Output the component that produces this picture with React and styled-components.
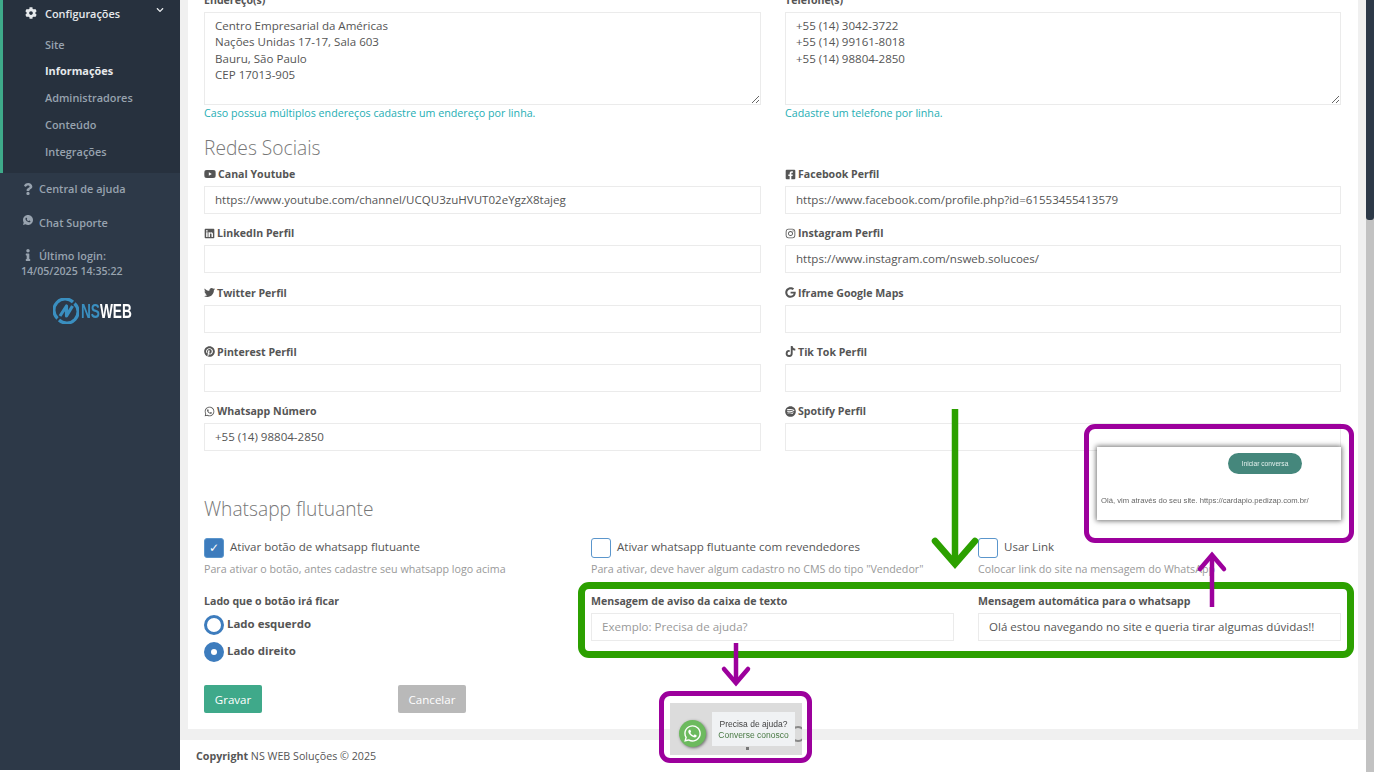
import React from 'react'
import styled, { createGlobalStyle } from 'styled-components'
import {
  FaCog, FaChevronDown, FaQuestion, FaWhatsapp, FaInfo, FaYoutube, FaFacebookSquare, FaLinkedin,
  FaInstagram, FaTwitter, FaGoogle, FaPinterest, FaTiktok, FaSpotify,
} from 'react-icons/fa'
import { RiWhatsappFill } from 'react-icons/ri'

const GlobalStyle = createGlobalStyle`
  html, body { margin: 0; padding: 0; height: 772px; overflow: hidden; background: #fff; }
  body, input, textarea, button { font-family: "Open Sans", "Liberation Sans", sans-serif; }
  * { box-sizing: border-box; }
`

const Page = styled.div`
  position: relative;
  display: flex;
  width: 1374px;
  height: 772px;
  overflow: hidden;
`

const Sidebar = styled.aside`
  flex: 0 0 180px;
  height: 770px;
  background: #2d3948;
  color: #98a3af;
  font-size: 10.9px;
  font-weight: 600;
`

const ActiveGroup = styled.div`
  height: 173px;
  background: #27313e;
  border-left: 3px solid #3eaa8a;
`

const GroupTitle = styled.div`
  display: flex;
  align-items: center;
  height: 26px;
  margin-bottom: 5.5px;
  padding-left: 22px;
  color: #e6e9ec;
  svg { font-size: 12px; }
  span { margin-left: 8px; flex: 1; }
  svg:last-child { font-size: 8px; margin: 0 16px 6px 0; }
`

const SubLink = styled.div`
  height: 26.75px;
  line-height: 26.75px;
  padding-left: 42px;
  color: ${p => (p.$active ? '#e6e9ec' : '#98a3af')};
  font-weight: ${p => (p.$active ? 700 : 600)};
`

const HelpLink = styled.div`
  display: flex;
  align-items: center;
  height: ${p => p.$h || 34}px;
  padding-left: 22px;
  svg { flex: 0 0 12px; font-size: ${p => p.$icon || 12}px; margin: ${p => p.$iconMargin || '0'}; }
  span { margin-left: 5px; }
`

const LoginDate = styled.div`
  margin-top: -7px;
  padding-left: 21px;
  font-size: 10.6px;
  line-height: 16px;
`

const Logo = styled.div`
  display: flex;
  align-items: center;
  margin: 18px 0 0 53px;
  height: 28px;
`

const LogoText = styled.div`
  display: inline-block;
  margin-left: 2px;
  font-family: "Liberation Sans", sans-serif;
  font-size: 21px;
  font-weight: 700;
  line-height: 28px;
  white-space: nowrap;
  color: #fff;
  transform: scaleX(0.65);
  transform-origin: left center;
  b { color: #3a8fc0; }
`

const Main = styled.main`
  flex: 1;
  display: flex;
  flex-direction: column;
  min-width: 0;
  background: #f0f0f0;
`

const Panel = styled.div`
  height: 740px;
  margin: -11px 8px 0;
  padding: 0 17px 0 16px;
  background: #fff;
  flex: 0 0 740px;
`

const TwoCols = styled.div`
  display: grid;
  grid-template-columns: 557px 556px;
  column-gap: 24px;
  row-gap: 8.33px;
`

const ThreeCols = styled.div`
  display: grid;
  grid-template-columns: repeat(3, 363px);
  column-gap: 24px;
`

const Field = styled.div`
  min-width: 0;
`

const Label = styled.div`
  display: flex;
  align-items: center;
  height: 20px;
  margin-bottom: 3px;
  padding-top: 2px;
  font-size: 10.6px;
  font-weight: 700;
  color: #555;
  svg { font-size: 11px; margin-right: 2px; flex: none; }
`

const TextInput = styled.input`
  display: block;
  width: 100%;
  height: 28px;
  padding: 0 10px 1px;
  border: 1px solid #ebebeb;
  border-radius: 0;
  outline: none;
  font-size: 11.55px;
  color: #555;
  &::placeholder { color: #999; opacity: 1; }
`

const TextArea = styled.textarea`
  display: block;
  width: 100%;
  height: 93px;
  padding: 5px 10px;
  border: 1px solid #ebebeb;
  border-radius: 0;
  outline: none;
  resize: vertical;
  font-size: 11.55px;
  line-height: 16.3px;
  color: #555;
`

const Help = styled.div`
  font-size: 10.7px;
  line-height: 16px;
  color: #25aeb4;
`

const SectionTitle = styled.h3`
  margin: ${p => p.$margin};
  font-size: 19.2px;
  font-weight: 300;
  line-height: 28px;
  color: #777;
`

const CheckRow = styled.div`
  display: flex;
  align-items: flex-start;
  gap: 6px;
  height: 20px;
  font-size: 11.55px;
  line-height: 18px;
  color: #555;
`

const CheckBox = styled.span`
  display: flex;
  align-items: center;
  justify-content: center;
  width: 20px;
  height: 20px;
  border-radius: 3px;
  border: 1px solid #5b96cc;
  background: ${p => (p.$checked ? '#3d7cbd' : '#fff')};
  color: #fff;
  font-family: "DejaVu Sans", sans-serif;
  font-size: 12px;
  font-weight: 700;
  line-height: 1;
`

const Hint = styled.div`
  margin: 3px 0 13px;
  font-size: 10.7px;
  line-height: 16px;
  color: #999;
  white-space: nowrap;
`

const RadioGroup = styled.div`
  padding-top: 2px;
`

const RadioRow = styled.div`
  display: flex;
  align-items: flex-start;
  gap: 3px;
  height: 20px;
  margin-bottom: 7px;
  font-size: 11.45px;
  font-weight: 700;
  line-height: 18px;
  color: #555;
`

const RadioDot = styled.span`
  display: flex;
  align-items: center;
  justify-content: center;
  width: 20px;
  height: 20px;
  border-radius: 50%;
  border: 3px solid #3d7cbd;
  background: ${p => (p.$checked ? '#3d7cbd' : '#fff')};
  &::after {
    content: "";
    display: ${p => (p.$checked ? 'block' : 'none')};
    width: 6px;
    height: 6px;
    border-radius: 50%;
    background: #fff;
  }
`

const Buttons = styled.div`
  display: flex;
  gap: 136px;
  margin-top: 16px;
`

const Button = styled.button`
  height: 28px;
  padding: 0;
  width: ${p => p.$w}px;
  border: 0;
  border-radius: 2px;
  background: ${p => p.$bg};
  color: #fff;
  font-size: 11.55px;
`

const Footer = styled.footer`
  display: flex;
  align-items: center;
  flex: 1;
  margin-top: 11px;
  padding: 0 16px;
  background: #fff;
  font-size: 10.7px;
  color: #555;
  b { font-weight: 700; }
`

const ScrollTrack = styled.div`
  flex: 0 0 8px;
  background: #c2c2c2;
`

const ScrollPart = styled.div`
  height: 220px;
  background: #2d3948;
  border-radius: 0 0 3px 3px;
`

// marcações feitas por cima da tela
const Marker = styled.div`
  position: absolute;
  left: ${p => p.$l}px;
  top: ${p => p.$t}px;
  width: ${p => p.$w}px;
  height: ${p => p.$h}px;
  border: ${p => p.$b}px solid ${p => p.$color};
  border-radius: 11px;
`

const ArrowSvg = styled.svg`
  position: absolute;
  left: ${p => p.$l}px;
  top: ${p => p.$t}px;
  overflow: visible;
`

const ChatShot = styled.div`
  position: absolute;
  left: 1097px;
  top: 447px;
  width: 244px;
  height: 73px;
  background: #fff;
  box-shadow: 0 0 5px 1px rgba(0, 0, 0, 0.55);
  font-family: "Liberation Sans", sans-serif;
`

const StartChat = styled.div`
  position: absolute;
  left: 131px;
  top: 6px;
  width: 74px;
  height: 21px;
  line-height: 21px;
  border-radius: 11px;
  background: #45877c;
  color: #e3f0ed;
  font-size: 6.7px;
  text-align: center;
  filter: blur(0.25px);
`

const ChatText = styled.div`
  position: absolute;
  left: 4px;
  top: 48px;
  font-size: 7.66px;
  line-height: 12px;
  color: #666;
  white-space: nowrap;
  filter: blur(0.25px);
`

const FloatShot = styled.div`
  position: absolute;
  left: 670px;
  top: 703px;
  width: 132px;
  height: 52px;
  background: #dcdcdc;
  overflow: hidden;
  font-family: "Liberation Sans", sans-serif;
`

const GreenCircle = styled.div`
  position: absolute;
  left: 9px;
  top: 17px;
  width: 27px;
  height: 27px;
  display: flex;
  align-items: center;
  justify-content: center;
  border-radius: 50%;
  background: #6cba5e;
  box-shadow: 1px 1px 3px rgba(0, 0, 0, 0.5);
  color: #fff;
  font-size: 19px;
`

const Bubble = styled.div`
  position: absolute;
  left: 42px;
  top: 9px;
  width: 83px;
  height: 34px;
  padding-top: 7px;
  background: #f0f2f4;
  font-size: 8.5px;
  line-height: 11px;
  text-align: center;
  color: #444;
  filter: blur(0.2px);
  em { display: block; font-style: normal; color: #4a7a45; }
`

const Ring = styled.div`
  position: absolute;
  left: 120px;
  top: 23px;
  width: 16px;
  height: 16px;
  border: 2px solid #888;
  border-radius: 50%;
`

const Dot = styled.div`
  position: absolute;
  left: 76px;
  top: 44px;
  width: 3px;
  height: 3px;
  background: #777;
`

const socialRows = [
  { icon: <FaYoutube size={12} />, label: 'Canal Youtube', value: 'https://www.youtube.com/channel/UCQU3zuHVUT02eYgzX8tajeg' },
  { icon: <FaFacebookSquare />, label: 'Facebook Perfil', value: 'https://www.facebook.com/profile.php?id=61553455413579' },
  { icon: <FaLinkedin />, label: 'LinkedIn Perfil', value: '' },
  { icon: <FaInstagram />, label: 'Instagram Perfil', value: 'https://www.instagram.com/nsweb.solucoes/' },
  { icon: <FaTwitter />, label: 'Twitter Perfil', value: '' },
  { icon: <FaGoogle />, label: 'Iframe Google Maps', value: '' },
  { icon: <FaPinterest />, label: 'Pinterest Perfil', value: '' },
  { icon: <FaTiktok />, label: 'Tik Tok Perfil', value: '' },
  { icon: <FaWhatsapp />, label: 'Whatsapp Número', value: '+55 (14) 98804-2850' },
  { icon: <FaSpotify />, label: 'Spotify Perfil', value: '' },
]

function LogoMark() {
  return (
    <svg width="26" height="26" viewBox="0 0 26 26" fill="none" stroke="#3a8fc0" strokeWidth="3.2" strokeLinejoin="round">
      <path d="M4.5 20.5A11.2 11.2 0 0 1 20 4" />
      <path d="M21.5 5.5A11.2 11.2 0 0 1 6 22" />
      <path d="M7 18L13.5 8V18L19.5 8" />
    </svg>
  )
}

function Arrow({ l, t, up, length, head, depth, width, color }) {
  const tip = up ? 0 : length
  const back = up ? depth : length - depth
  return (
    <ArrowSvg $l={l - head} $t={t} width={head * 2} height={length} fill="none" stroke={color} strokeWidth={width} strokeLinecap="round">
      <path d={`M${head} 0V${length}`} strokeLinecap="butt" />
      <path d={`M2 ${back}L${head} ${tip}L${head * 2 - 2} ${back}`} />
    </ArrowSvg>
  )
}

export default function App() {
  return (
    <Page>
      <GlobalStyle />
      <Sidebar>
        <ActiveGroup>
          <GroupTitle><FaCog /><span>Configurações</span><FaChevronDown /></GroupTitle>
          <SubLink>Site</SubLink>
          <SubLink $active>Informações</SubLink>
          <SubLink>Administradores</SubLink>
          <SubLink>Conteúdo</SubLink>
          <SubLink>Integrações</SubLink>
        </ActiveGroup>
        <HelpLink $h={31}><FaQuestion /><span>Central de ajuda</span></HelpLink>
        <HelpLink $h={36} $icon={14} $iconMargin="0 0 4px"><RiWhatsappFill /><span>Chat Suporte</span></HelpLink>
        <HelpLink $h={30}><FaInfo /><span>Último login:</span></HelpLink>
        <LoginDate>14/05/2025 14:35:22</LoginDate>
        <Logo>
          <LogoMark />
          <LogoText><b>NS</b>WEB</LogoText>
        </Logo>
      </Sidebar>
      <Main>
        <Panel>
          <TwoCols>
            <Field>
              <Label>Endereço(s)</Label>
              <TextArea readOnly value={'Centro Empresarial da Américas\nNações Unidas 17-17, Sala 603\nBauru, São Paulo\nCEP 17013-905'} />
              <Help>Caso possua múltiplos endereços cadastre um endereço por linha.</Help>
            </Field>
            <Field>
              <Label>Telefone(s)</Label>
              <TextArea readOnly value={'+55 (14) 3042-3722\n+55 (14) 99161-8018\n+55 (14) 98804-2850'} />
              <Help>Cadastre um telefone por linha.</Help>
            </Field>
          </TwoCols>
          <SectionTitle $margin="13px 0 1px">Redes Sociais</SectionTitle>
          <TwoCols>
            {socialRows.map(item => (
              <Field key={item.label}>
                <Label>{item.icon}{item.label}</Label>
                <TextInput readOnly value={item.value} />
              </Field>
            ))}
          </TwoCols>
          <SectionTitle $margin="44px 0 15px">Whatsapp flutuante</SectionTitle>
          <ThreeCols>
            <Field>
              <CheckRow><CheckBox $checked>✓</CheckBox>Ativar botão de whatsapp flutuante</CheckRow>
              <Hint>Para ativar o botão, antes cadastre seu whatsapp logo acima</Hint>
            </Field>
            <Field>
              <CheckRow><CheckBox />Ativar whatsapp flutuante com revendedores</CheckRow>
              <Hint>Para ativar, deve haver algum cadastro no CMS do tipo "Vendedor"</Hint>
            </Field>
            <Field>
              <CheckRow><CheckBox />Usar Link</CheckRow>
              <Hint>Colocar link do site na mensagem do WhatsApp</Hint>
            </Field>
            <Field>
              <Label>Lado que o botão irá ficar</Label>
              <RadioGroup>
                <RadioRow><RadioDot />Lado esquerdo</RadioRow>
                <RadioRow><RadioDot $checked />Lado direito</RadioRow>
              </RadioGroup>
            </Field>
            <Field>
              <Label>Mensagem de aviso da caixa de texto</Label>
              <TextInput readOnly placeholder="Exemplo: Precisa de ajuda?" />
            </Field>
            <Field>
              <Label>Mensagem automática para o whatsapp</Label>
              <TextInput readOnly value="Olá estou navegando no site e queria tirar algumas dúvidas!!" />
            </Field>
          </ThreeCols>
          <Buttons>
            <Button $w={58} $bg="#3fa98a">Gravar</Button>
            <Button $w={68} $bg="#b9b9b9">Cancelar</Button>
          </Buttons>
        </Panel>
        <Footer><span><b>Copyright</b> NS WEB Soluções © 2025</span></Footer>
      </Main>
      <ScrollTrack><ScrollPart /></ScrollTrack>

      <Marker $l={578} $t={582} $w={776} $h={76} $b={7} $color="#2ca000" />
      <Arrow l={955} t={409} length={155} head={22} depth={23} width={6.5} color="#2ca000" />
      <Marker $l={1084} $t={424} $w={270} $h={119} $b={5.5} $color="#9c009c" />
      <ChatShot>
        <StartChat>Iniciar conversa</StartChat>
        <ChatText>Olá, vim através do seu site. https://cardapio.pedizap.com.br/</ChatText>
      </ChatShot>
      <Arrow l={1212} t={555} up length={52} head={14} depth={14} width={4.5} color="#9c009c" />
      <Arrow l={736} t={643} length={40} head={14} depth={14} width={4.5} color="#9c009c" />
      <Marker $l={659} $t={691} $w={153} $h={72} $b={5} $color="#9c009c" />
      <FloatShot>
        <Ring />
        <Dot />
        <GreenCircle><FaWhatsapp /></GreenCircle>
        <Bubble>Precisa de ajuda?<em>Converse conosco</em></Bubble>
      </FloatShot>
    </Page>
  )
}
